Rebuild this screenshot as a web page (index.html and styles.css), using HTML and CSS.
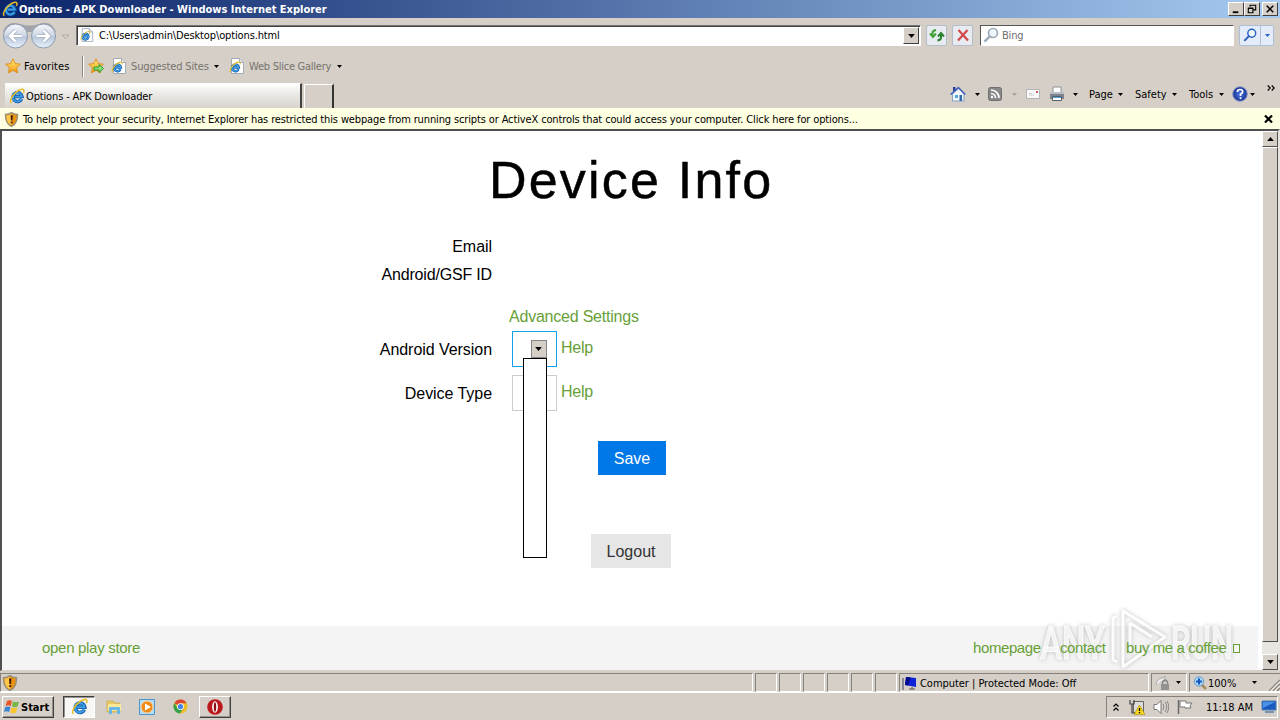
FILE: index.html
```html
<!DOCTYPE html>
<html lang="en">
<head>
<meta charset="utf-8">
<title>Options - APK Downloader</title>
<link rel="stylesheet" href="styles.css">
</head>
<body>
<svg class="defs" width="0" height="0">
  <defs>
    <linearGradient id="orb" x1="0" y1="0" x2="0" y2="1"><stop offset="0" stop-color="#f6f8fb"/><stop offset=".48" stop-color="#ced7e4"/><stop offset=".52" stop-color="#b8c7dc"/><stop offset="1" stop-color="#e9f2fb"/></linearGradient>
    <linearGradient id="gold" x1="0" y1="0" x2="0" y2="1"><stop offset="0" stop-color="#fff27a"/><stop offset="1" stop-color="#f5960f"/></linearGradient>
    <radialGradient id="blueball"><stop offset="0" stop-color="#4a78e8"/><stop offset="1" stop-color="#1c3490"/></radialGradient>
    <symbol id="ie" viewBox="0 0 16 16">
      <path d="M12.600 11A4.500 4.500 0 1 1 13 8.600H5.500" fill="none" stroke="#1558a6" stroke-width="3.400"/>
      <path d="M12.400 10.800A4.400 4.400 0 1 1 12.700 8.600H5.500" fill="none" stroke="#3c9fe8" stroke-width="1.900"/>
      <path d="M2.400 14.800C.2 13.800 2.500 8 7 4.300 10.500 1.400 14 .6 14.800 2c.3.800.1 1.800-.4 2.800" fill="none" stroke="#e8bd2c" stroke-width="1.500"/>
    </symbol>
    <symbol id="iepage" viewBox="0 0 16 16">
      <path d="M2.500.5h8l4 4v11h-12z" fill="#fff" stroke="#a3abb4"/><path d="M10.500.5v4h4" fill="#dde4ea" stroke="#a3abb4"/>
      <use href="#ie" x="0" y="3" width="12" height="12"/>
    </symbol>
    <symbol id="star" viewBox="0 0 16 16"><path d="M8 .8l2.200 4.800 5.200.6-3.900 3.500 1.100 5.200L8 12.300l-4.600 2.600 1.100-5.200L.6 6.200l5.200-.6z" fill="url(#gold)" stroke="#d88b16" stroke-width=".9"/></symbol>
    <symbol id="shield" viewBox="0 0 16 16"><path d="M8 .7c2 1.500 4 2 6.500 2 0 6-1 10-6.500 12.700C2.500 12.700 1.500 8.700 1.500 2.700 4 2.700 6 2.200 8 .7z" fill="#e8920f" stroke="#98907c" stroke-width="1.500"/><path d="M8 1.800v12.600C4 12 2.700 9 2.500 3.700 5 3.600 6.500 2.900 8 1.800z" fill="#ffc64a"/><path d="M7 3.500h2.400L9 9H7.400zM7.100 10.300h2.100V12H7.100z" fill="#411c08"/></symbol>
    <symbol id="tri" viewBox="0 0 5 3"><path d="M0 0h5L2.500 3z" fill="currentColor"/></symbol>
    <symbol id="lens" viewBox="0 0 16 16"><circle cx="10" cy="6" r="4.500" fill="#eef6fc" stroke="currentColor" stroke-width="1.700"/><path d="M6.700 9.300L1.500 14.700" stroke="currentColor" stroke-width="2.400"/></symbol>
  </defs>
</svg>

<header class="titlebar">
  <svg class="i16"><use href="#ie"/></svg>
  <span class="title">Options - APK Downloader - Windows Internet Explorer</span>
  <div class="winbtns">
    <svg class="winbtn" viewBox="0 0 15 13"><path d="M4 9h6v2H4z"/></svg>
    <svg class="winbtn" viewBox="0 0 15 13"><path d="M5.500 4V2.500h6v5H9M5 2.500h7M3.500 5.500h5v5h-5zM3 6h6" fill="none" stroke="#000" stroke-width="1.200"/></svg>
    <svg class="winbtn close" viewBox="0 0 15 13"><path d="M4 3l7 7M11 3l-7 7" stroke="#000" stroke-width="1.700"/></svg>
  </div>
</header>

<div class="navbar">
  <svg class="orbs" viewBox="0 0 72 30">
    <path d="M3 11C6 1 14 1 20 3q10 3 19 0c8-3 14 0 17 8z" fill="#a3a4aa"/>
    <circle cx="15.500" cy="15" r="12" fill="url(#orb)" stroke="#8c9aaf"/><circle cx="43.500" cy="15" r="12" fill="url(#orb)" stroke="#8c9aaf"/>
    <path d="M22 15H10M15.500 9.500L10 15l5.500 5.500M37 15h12M43.500 9.500L49 15l-5.500 5.500" fill="none" stroke="#94a3b8" stroke-width="4"/>
    <path d="M22 15H10M15.500 9.500L10 15l5.500 5.500M37 15h12M43.500 9.500L49 15l-5.500 5.500" fill="none" stroke="#fff" stroke-width="2.700"/>
    <path d="M62 14h7l-3.500 3.500z" fill="#d8d4cc" stroke="#aaa59c" stroke-width=".8"/>
  </svg>
  <div class="address">
    <svg class="i14"><use href="#iepage"/></svg>
    <span class="txt url">C:\Users\admin\Desktop\options.html</span>
    <span class="combo"><svg class="tri7"><use href="#tri"/></svg></span>
  </div>
  <span class="tool"><svg class="i16" viewBox="0 0 16 16"><path d="M3.500 8.500V6Q3.500 3.500 7 3M1 6.500l3 3.500 3-3.500" fill="none" stroke="#42a338" stroke-width="2"/><path d="M12 8v2.500Q12 13 8.500 13.500M9 9.500L12 6l3 3.500" fill="none" stroke="#288030" stroke-width="2"/></svg></span>
  <span class="tool stop"><svg class="i16" viewBox="0 0 16 16"><path d="M3.500 3L13 13.500M12.500 3L3 13.500" stroke="#d34a4d" stroke-width="2.300"/></svg></span>
  <div class="search"><svg class="i16 glass"><use href="#lens"/></svg><span class="txt bing">Bing</span></div>
  <div class="go"><svg class="i14"><use href="#lens"/></svg><span class="godrop"><svg class="tri5"><use href="#tri"/></svg></span></div>
</div>

<div class="favbar">
  <svg class="i16"><use href="#star"/></svg><span class="txt fav">Favorites</span>
  <i class="sep"></i>
  <svg class="i16" viewBox="0 0 16 16"><use href="#star"/><path d="M6 9h5V6.500l4.500 4-4.500 4V12H6z" fill="#8fdc78" stroke="#2b9e2c"/></svg>
  <svg class="i16 sug"><use href="#iepage"/></svg><span class="txt dim sugtext">Suggested Sites</span><svg class="tri5 a"><use href="#tri"/></svg>
  <svg class="i16 slice"><use href="#iepage"/></svg><span class="txt dim slicetext">Web Slice Gallery</span><svg class="tri5 a"><use href="#tri"/></svg>
</div>

<div class="tabrow">
  <div class="tab"><svg class="i16"><use href="#ie"/></svg><span class="txt tabtext">Options - APK Downloader</span></div>
  <div class="newtab"></div>
  <div class="commands">
    <svg class="i16" viewBox="0 0 16 16"><path d="M3 1h2.500v4H3z" fill="#283b9b"/><path d="M2.500 8L9 2.500 14 8v7H2.500z" fill="#f1f6fc" stroke="#8ba2c3"/><path d="M.7 8.500L8.300 1.500l7 7" fill="none" stroke="#435fba" stroke-width="1.600"/><path d="M5 9h3v3H5z" fill="#55a5df"/><path d="M9.500 9H12v6H9.500z" fill="#316ba9"/></svg>
    <svg class="tri5 t1"><use href="#tri"/></svg>
    <svg class="i14 rss" viewBox="0 0 14 14"><rect x=".5" y=".5" width="13" height="13" rx="2" fill="#898989" stroke="#6f6f6f"/><path d="M3 6.500a4.500 4.500 0 0 1 4.500 4.500M3 3a8 8 0 0 1 8 8" fill="none" stroke="#fff" stroke-width="1.700"/><circle cx="4" cy="10" r="1.200" fill="#fff"/></svg>
    <svg class="tri5 t2"><use href="#tri"/></svg>
    <svg class="mail" viewBox="0 0 14 10"><path d="M.5.500h13v9H.5z" fill="#f9f9f9" stroke="#b3b3b3"/><path d="M10 2h2v2h-2z" fill="#cb5757"/><path d="M3 6h5M3 4.500h3" stroke="#ccc"/></svg>
    <svg class="i16 print" viewBox="0 0 16 16"><path d="M4 1h8v6H4z" fill="#fff" stroke="#8f9196"/><path d="M1 6h14v7H1z" fill="#7d828c"/><path d="M1 6h14v2H1z" fill="#b8bec8"/><path d="M3.500 10.500h9v4h-9z" fill="#fff" stroke="#5c6067"/><path d="M4 11h8v1H4z" fill="#43a2df"/></svg>
    <svg class="tri5 t3"><use href="#tri"/></svg>
    <span class="txt cmd page-menu">Page</span><svg class="tri5"><use href="#tri"/></svg>
    <span class="txt cmd safety">Safety</span><svg class="tri5"><use href="#tri"/></svg>
    <span class="txt cmd tools">Tools</span><svg class="tri5"><use href="#tri"/></svg>
    <svg class="i16 help" viewBox="0 0 16 16"><circle cx="8" cy="8" r="7.300" fill="url(#blueball)" stroke="#8a98c7"/><path d="M5.300 6Q5.500 3.500 8 3.500q2.700 0 2.700 2.200Q10.700 7 8.500 8.300V10M8.500 11.300v1.700" fill="none" stroke="#fff" stroke-width="1.700"/></svg>
    <svg class="tri5 t4"><use href="#tri"/></svg>
    <svg class="chev" viewBox="0 0 8 6"><path d="M.7.500L3.200 3 .7 5.500M4.700.5L7.200 3 4.700 5.500" fill="none" stroke="#000" stroke-width="1.200"/></svg>
  </div>
</div>

<div class="infobar">
  <svg class="i15"><use href="#shield"/></svg>
  <span class="txt infotext">To help protect your security, Internet Explorer has restricted this webpage from running scripts or ActiveX controls that could access your computer. Click here for options...</span>
  <svg class="infoclose" viewBox="0 0 9 8"><path d="M1 .5l7 7M8 .5l-7 7" stroke="#000" stroke-width="2.200"/></svg>
</div>

<div class="viewport">
  <main class="page">
    <h1>Device Info</h1>
    <div class="row email"><label>Email</label></div>
    <div class="row gsf"><label>Android/GSF ID</label></div>
    <div class="row adv"><a>Advanced Settings</a></div>
    <div class="row sel"><label>Android Version</label><div class="select active"><span class="selbtn"><svg class="tri7"><use href="#tri"/></svg></span><div class="list"></div></div><a>Help</a></div>
    <div class="row sel two"><label>Device Type</label><div class="select"></div><a>Help</a></div>
    <button class="save">Save</button>
    <button class="logout">Logout</button>
    <footer><a>open play store</a><a class="home">homepage</a><a class="contact">contact</a><a class="coffee">buy me a coffee</a><i class="box"></i></footer>
  </main>
  <div class="scroll">
    <span class="sb"><svg class="tri7 up"><use href="#tri"/></svg></span>
    <span class="thumb"></span><span class="track"></span>
    <span class="sb"><svg class="tri7"><use href="#tri"/></svg></span>
  </div>
  <svg class="watermark" viewBox="0 0 210 70">
    <g class="wm">
      <text x="9" y="52" textLength="65" lengthAdjust="spacingAndGlyphs">ANY</text>
      <text x="140" y="52" textLength="62" lengthAdjust="spacingAndGlyphs">RUN</text>
      <path d="M86 9L82 11v42l4 2"/>
      <path d="M92 4L134 30 92 60z"/>
      <path d="M99 16v30M99 16l22 14"/>
    </g>
  </svg>
</div>

<div class="status">
  <div class="pane first"><svg class="i16"><use href="#shield"/></svg></div>
  <div class="pane"></div><div class="pane"></div><div class="pane"></div><div class="pane"></div><div class="pane"></div><div class="pane"></div>
  <div class="pane zone"><svg class="i16" viewBox="0 0 16 16"><path d="M1 3v12" stroke="#6b7582" stroke-width="1.500"/><path d="M4 2l10 1v9L3 10z" fill="#0d22d8"/><path d="M4 2l5 .5L6 10.500 3 10z" fill="#030b8d"/><path d="M10 12v2H7M10 14h3" stroke="#555" fill="none"/></svg><span class="txt zonetext">Computer | Protected Mode: Off</span></div>
  <div class="pane lock"><svg class="i16" viewBox="0 0 16 16"><path d="M1 10Q2 3 8 3l2-2v6L8 5" fill="#eee" stroke="#aaa"/><path d="M7.500 9V7Q10 3 12.500 7v2" fill="none" stroke="#888" stroke-width="1.500"/><path d="M6 9h8v6H6z" fill="#929292"/></svg><svg class="tri5"><use href="#tri"/></svg></div>
  <div class="pane zoom"><svg class="i14" viewBox="0 0 14 14"><path d="M8 8l5 5" stroke="#a98c5d" stroke-width="2.500"/><circle cx="6" cy="5.500" r="4.700" fill="#a8d9fb" stroke="#6899c5"/><path d="M3 5.500h6M6 2.500v6" stroke="#1755bd" stroke-width="2"/></svg><span class="txt pct">100%</span><svg class="tri5"><use href="#tri"/></svg><svg class="grip" viewBox="0 0 12 12"><path d="M1 12L12 1M5 12l7-7M9 12l3-3" stroke="#88847c" stroke-width="1.500"/><path d="M2.500 12L12 2.500M6.500 12L12 6.500" stroke="#fff"/></svg></div>
</div>

<div class="taskbar">
  <div class="start"><svg class="i16" viewBox="0 0 16 16"><path d="M3 2q2.500-1.500 5 0L6.800 7Q4.300 5.700 1.500 7z" fill="#e8562a"/><path d="M9 2.500q3 1.500 6 0L13.500 7.500q-3 1.500-5.500 0z" fill="#75b846"/><path d="M1.300 8q2.700-1.200 5.200 0L5 13Q2.500 11.700 0 13z" fill="#3885d3"/><path d="M7.600 8.500q2.700 1.500 5.700 0L12 13.500q-3 1.500-5.700 0z" fill="#fcc32c"/></svg><b>Start</b></div>
  <div class="task ie"><svg class="i18"><use href="#ie"/></svg></div>
  <svg class="i16 folder" viewBox="0 0 16 16"><path d="M1 2h6l1 2h6v9H1z" fill="#e9c960" stroke="#c2a247" stroke-width=".6"/><path d="M2 5h13v7H2z" fill="#fbe997"/><path d="M3 15V9q0-1 1-1h9q1 0 1 1v6h-3v-4H6v4z" fill="#67b8e7"/></svg>
  <svg class="i16 wmp" viewBox="0 0 16 16"><path d="M.5.500h15v15H.5z" fill="#b5dcf5" stroke="#4c94cd"/><circle cx="8" cy="8" r="6" fill="#f28a18" stroke="#fbd19b"/><path d="M6 4.500l6 3.500-6 3.500z" fill="#fff"/></svg>
  <svg class="i15 chrome" viewBox="0 0 16 16"><circle cx="8" cy="8" r="7.500" fill="#eebd28"/><path d="M8 8L1.500 4.200A7.500 7.500 0 0 1 14.600 4.500H8z" fill="#dd4434"/><path d="M1.500 4.200A7.500 7.500 0 0 0 7.500 15.500L11 9.500 5 10z" fill="#35a24b"/><circle cx="8" cy="8" r="3.600" fill="#fff"/><circle cx="8" cy="8" r="2.800" fill="#4283e5"/></svg>
  <div class="task opera"><svg class="i16" viewBox="0 0 16 16"><circle cx="8" cy="8" r="7.800" fill="#bb171c"/><ellipse cx="8" cy="8" rx="2.900" ry="5.700" fill="#fff"/><ellipse cx="8" cy="8" rx="1.200" ry="4.800" fill="#8c1015"/></svg></div>
  <div class="tray">
    <svg class="upchev" viewBox="0 0 6 8"><path d="M.5 3.500L3 1l2.500 2.500M.5 7.500L3 5l2.500 2.500" fill="none" stroke="#000" stroke-width="1.200"/></svg>
    <svg class="i16 net" viewBox="0 0 16 16"><path d="M4.500 2.500h10v11h-10z" fill="#ddd" stroke="#66645f"/><path d="M1 1v4h4V1M3 5v9h4" fill="none" stroke="#444" stroke-width="1.200"/><path d="M10.500 6L16 15.500H5z" fill="#f7d51c" stroke="#a68b15" stroke-width=".6"/><path d="M10.500 9v3M10.500 13v1.300" stroke="#000" stroke-width="1.300"/></svg>
    <svg class="i16 vol" viewBox="0 0 16 16"><path d="M1 5.500h3l4-4v13l-4-4H1z" fill="#fff" stroke="#777"/><path d="M10 5q2 3 0 6M12 3q3.500 5 0 10M14 2q3.500 6 0 12" fill="none" stroke="#888"/></svg>
    <svg class="i16 flag" viewBox="0 0 16 16"><path d="M1.500 1v14" stroke="#686868" stroke-width="1.500"/><path d="M3 2h6v2h6l-2 3 1 2H8V8H3z" fill="#fff" stroke="#777"/></svg>
    <span class="txt clock">11:18 AM</span>
    <svg class="i16 desk" viewBox="0 0 16 16"><path d="M1 2h14v9H1z" fill="#185ac0" stroke="#5180b4"/><path d="M2 3h12L2 9z" fill="#4b91e8"/><path d="M4 13h9" stroke="#7994b2" stroke-width="2"/></svg>
  </div>
</div>
</body>
</html>
```
FILE: styles.css
```css
* { box-sizing: border-box; }
body { margin: 0; width: 1280px; height: 720px; overflow: hidden; display: flex; flex-direction: column; background: #d5cfc7; color: #000; font: 11px/14px "DejaVu Sans Condensed", "DejaVu Sans", sans-serif; font-stretch: condensed; white-space: nowrap; }
.defs { position: absolute; }
svg { flex: none; display: block; }
.i14 { width: 14px; height: 14px; }
.i15 { width: 15px; height: 15px; }
.i16 { width: 16px; height: 16px; }
.i18 { width: 17px; height: 17px; }
.tri5 { width: 5px; height: 3px; }
.tri7 { width: 7px; height: 4px; }
.txt { padding-top: 2px; }

.titlebar { height: 18px; flex: none; display: flex; align-items: center; padding: 0 2px; background: linear-gradient(90deg, #0b246a, #a6caf0); color: #fff; font-weight: bold; }
.title { margin-left: 1px; padding-top: 1px; }
.winbtns { display: flex; margin-left: auto; }
.winbtn { width: 16px; height: 14px; background: #d5cfc7; border: 1px solid; border-color: #fff #404040 #404040 #fff; }
.close { margin-left: 2px; }

.navbar { height: 34px; flex: none; display: flex; align-items: center; }
.orbs { width: 72px; height: 30px; margin-top: 2px; }
.address { width: 845px; height: 21px; margin-left: 4px; display: flex; align-items: center; background: #fff; border: 1px solid; border-color: #777 #fff #fff #777; box-shadow: inset 1px 1px #404040; padding-left: 3px; }
.url { margin-left: 5px; letter-spacing: -.13px; }
.combo { width: 16px; height: 17px; margin: 1px 1px 0 auto; display: grid; place-items: center; background: #d5cfc7; border: 1px solid; border-color: #fff #404040 #404040 #fff; }
.tool { width: 21px; height: 21px; margin-left: 5px; display: grid; place-items: center; background: #e8ecf1; border: 1px solid #b4bdc9; border-radius: 2px; }
.stop { margin-left: 5px; }
.search { width: 254px; height: 21px; margin-left: 7px; display: flex; align-items: center; background: #fff; border: 1px solid; border-color: #555 #fff #fff #555; padding-left: 2px; }
.glass { color: #9eabb8; }
.bing { margin-left: 3px; color: #6d6d6d; letter-spacing: -.2px; }
.go { width: 35px; height: 21px; margin-left: 5px; display: flex; align-items: center; background: #e3ecf8; border: 1px solid #adbfd7; border-radius: 2px; padding-left: 3px; color: #2c62c4; }
.godrop { margin-left: 3px; width: 14px; height: 19px; display: grid; place-items: center; border-left: 1px solid #adbfd7; }

.favbar { height: 28px; flex: none; display: flex; align-items: center; padding-left: 5px; }
.fav { margin-left: 3px; width: 47px; letter-spacing: .1px; }
.sep { width: 2px; height: 21px; margin: 0 4px 0 11px; border-left: 1px solid #8a867f; border-right: 1px solid #fff; }
.sug { margin-left: 7px; }
.dim { color: #77736d; }
.sugtext { margin-left: 4px; width: 79px; letter-spacing: -.15px; }
.slice { margin-left: 10px; }
.slicetext { margin-left: 4px; width: 84px; letter-spacing: -.25px; }
.a { margin-left: 4px; }

.tabrow { height: 28px; flex: none; display: flex; align-items: flex-end; }
.tab { width: 297px; height: 25px; margin-left: 5px; display: flex; align-items: center; padding-left: 4px; background: linear-gradient(#fff, #eceae7 40%, #d8d3cb); border-right: 2px solid #404040; border-top: 1px solid #fff; }
.tabtext { margin-left: 1px; letter-spacing: -.15px; }
.newtab { width: 30px; height: 24px; margin-left: 2px; border: 1px solid #fff; border-right: 2px solid #333; border-bottom: 0; }
.commands { align-self: stretch; display: flex; align-items: center; margin-left: 616px; }
.t1 { margin-left: 9px; }
.rss { margin-left: 8px; }
.t2 { margin-left: 10px; color: #aaa49a; }
.mail { width: 14px; height: 10px; margin-left: 9px; }
.print { margin-left: 9px; }
.t3 { margin-left: 8px; }
.cmd { margin-left: 11px; }
.page-menu { width: 29px; }
.safety { width: 37px; margin-left: 12px; }
.tools { width: 30px; margin-left: 12px; }
.help { margin-left: 8px; }
.t4 { margin-left: 2px; }
.chev { width: 8px; height: 6px; margin: -12px 0 0 12px; }

.infobar { height: 21px; flex: none; display: flex; align-items: center; padding: 1px 7px 0 4px; background: #ffffe1; }
.infotext { margin-left: 4px; letter-spacing: -.13px; }
.infoclose { width: 9px; height: 8px; margin-left: auto; }

.viewport { height: 542px; flex: none; display: flex; position: relative; border: 1px solid; border-width: 2px 2px 1px 2px; border-color: #505050 #e8e5e0 #d6d2ca #505050; background: #fff; }
.page { width: 1260px; flex: none; display: flex; flex-direction: column; font: 16px/20px "Liberation Sans", Arial, sans-serif; }
.page a { color: #689f38; letter-spacing: -.22px; }
h1 { width: 290px; margin: 19px 0 0 487px; font-size: 52px; line-height: 60px; font-weight: 400; letter-spacing: 2.2px; -webkit-text-stroke: .5px #000; }
.row { display: flex; }
.row label { width: 490px; text-align: right; letter-spacing: -.05px; }
.email { margin-top: 27px; }
.gsf { margin-top: 8px; }
.row.gsf label { letter-spacing: -.17px; }
.adv { margin: 22px 0 0 507px; }
.sel { height: 36px; margin-top: 4px; align-items: center; }
.sel label { padding-top: 2px; }
.two { margin-top: 8px; }
.select { width: 45px; height: 36px; margin-left: 20px; position: relative; border: 1px solid #ccc; }
.active { border-color: #129fea; z-index: 2; }
.selbtn { position: absolute; left: 18px; top: 8px; width: 16px; height: 18px; padding-right: 1px; display: grid; place-items: center; background: #d5cfc7; border: 1px solid #858585; }
.list { position: absolute; left: 10px; top: 26px; width: 24px; height: 200px; background: #fff; border: 1px solid #000; }
.sel a { margin: -3px 0 0 4px; }
button { height: 34px; flex: none; padding: 2px 0 0; border: 0; font: inherit; }
.save { width: 68px; margin: 30px 0 0 596px; background: #0078e7; color: #fff; }
.logout { width: 80px; margin: 59px 0 0 589px; background: #e6e6e6; color: #333; }
footer { height: 44px; flex: none; width: 1256px; margin-top: 58px; display: flex; align-items: center; background: #f4f4f4; padding: 0 18px 0 40px; font-size: 15px; }
.page footer a { letter-spacing: -.4px; position: relative; z-index: 4; }
.page footer a:first-child { letter-spacing: -.3px; }
.home { margin-left: auto; width: 67px; }
.contact { margin-left: 20px; width: 46px; }
.coffee { margin-left: 20px; width: 101px; }
.box { width: 7px; height: 9px; margin-left: 6px; border: 1px solid #689f38; position: relative; z-index: 4; }
.scroll { width: 16px; display: flex; flex-direction: column; background: #d5cfc7; }
.sb { width: 16px; height: 16px; display: grid; place-items: center; background: #d5cfc7; border: 1px solid; border-color: #fff #505050 #505050 #fff; }
.up { transform: rotate(180deg); }
.thumb { height: 495px; border: 1px solid; border-color: #fff #505050 #505050 #fff; }
.track { flex: 1; background: #e9e6e2; }
.watermark { position: absolute; left: 1029px; top: 476px; width: 210px; height: 70px; z-index: 3; }
.wm { fill: none; stroke: #fff; stroke-width: 3; stroke-linejoin: round; opacity: .75; font: 500 46px Roboto, sans-serif; filter: drop-shadow(0 0 2px #aaa); }
.wm text { fill: #f3f3f3; stroke-width: 1; }

.status { height: 22px; flex: none; display: flex; padding-top: 2px; gap: 2px; border-bottom: 1px solid #fff; }
.pane { width: 22px; height: 19px; flex: none; display: flex; align-items: center; border: 1px solid; border-color: #85817a #fff #fff #85817a; }
.first { width: 753px; padding-left: 1px; }
.zone { width: 250px; padding-left: 2px; }
.zonetext { margin-left: 2px; letter-spacing: -.04px; }
.lock { width: 36px; padding-left: 3px; gap: 5px; }
.zoom { flex: 1; padding-left: 3px; border-right: 0; }
.pct { margin-left: 1px; width: 44px; }
.grip { width: 12px; height: 12px; margin: 5px 0 0 auto; }

.taskbar { flex: 1; display: flex; align-items: center; padding: 0 2px; }
.start { width: 52px; height: 22px; display: flex; align-items: center; gap: 1px; padding-left: 1px; border: 1px solid; border-color: #fff #404040 #404040 #fff; box-shadow: inset -1px -1px #96928c; }
.start b { padding-top: 2px; }
.task { width: 32px; height: 22px; display: grid; place-items: center; border: 1px solid; border-color: #fff #404040 #404040 #fff; box-shadow: inset -1px -1px #96928c; }
.ie { margin-left: 9px; background: #f8f7f5; border-color: #404040 #fff #fff #404040; box-shadow: inset 1px 1px #96928c; }
.folder { margin-left: 11px; }
.wmp { margin-left: 17px; }
.chrome { margin-left: 18px; }
.opera { margin-left: 11px; }
.tray { width: 172px; height: 22px; margin-left: auto; display: flex; align-items: center; border: 1px solid; border-color: #85817a #fff #fff #85817a; padding-left: 6px; }
.upchev { width: 6px; height: 8px; }
.net { margin-left: 10px; }
.vol { margin-left: 8px; }
.flag { margin-left: 8px; }
.clock { margin-left: 13px; width: 48px; }
.desk { margin-left: auto; }
```
